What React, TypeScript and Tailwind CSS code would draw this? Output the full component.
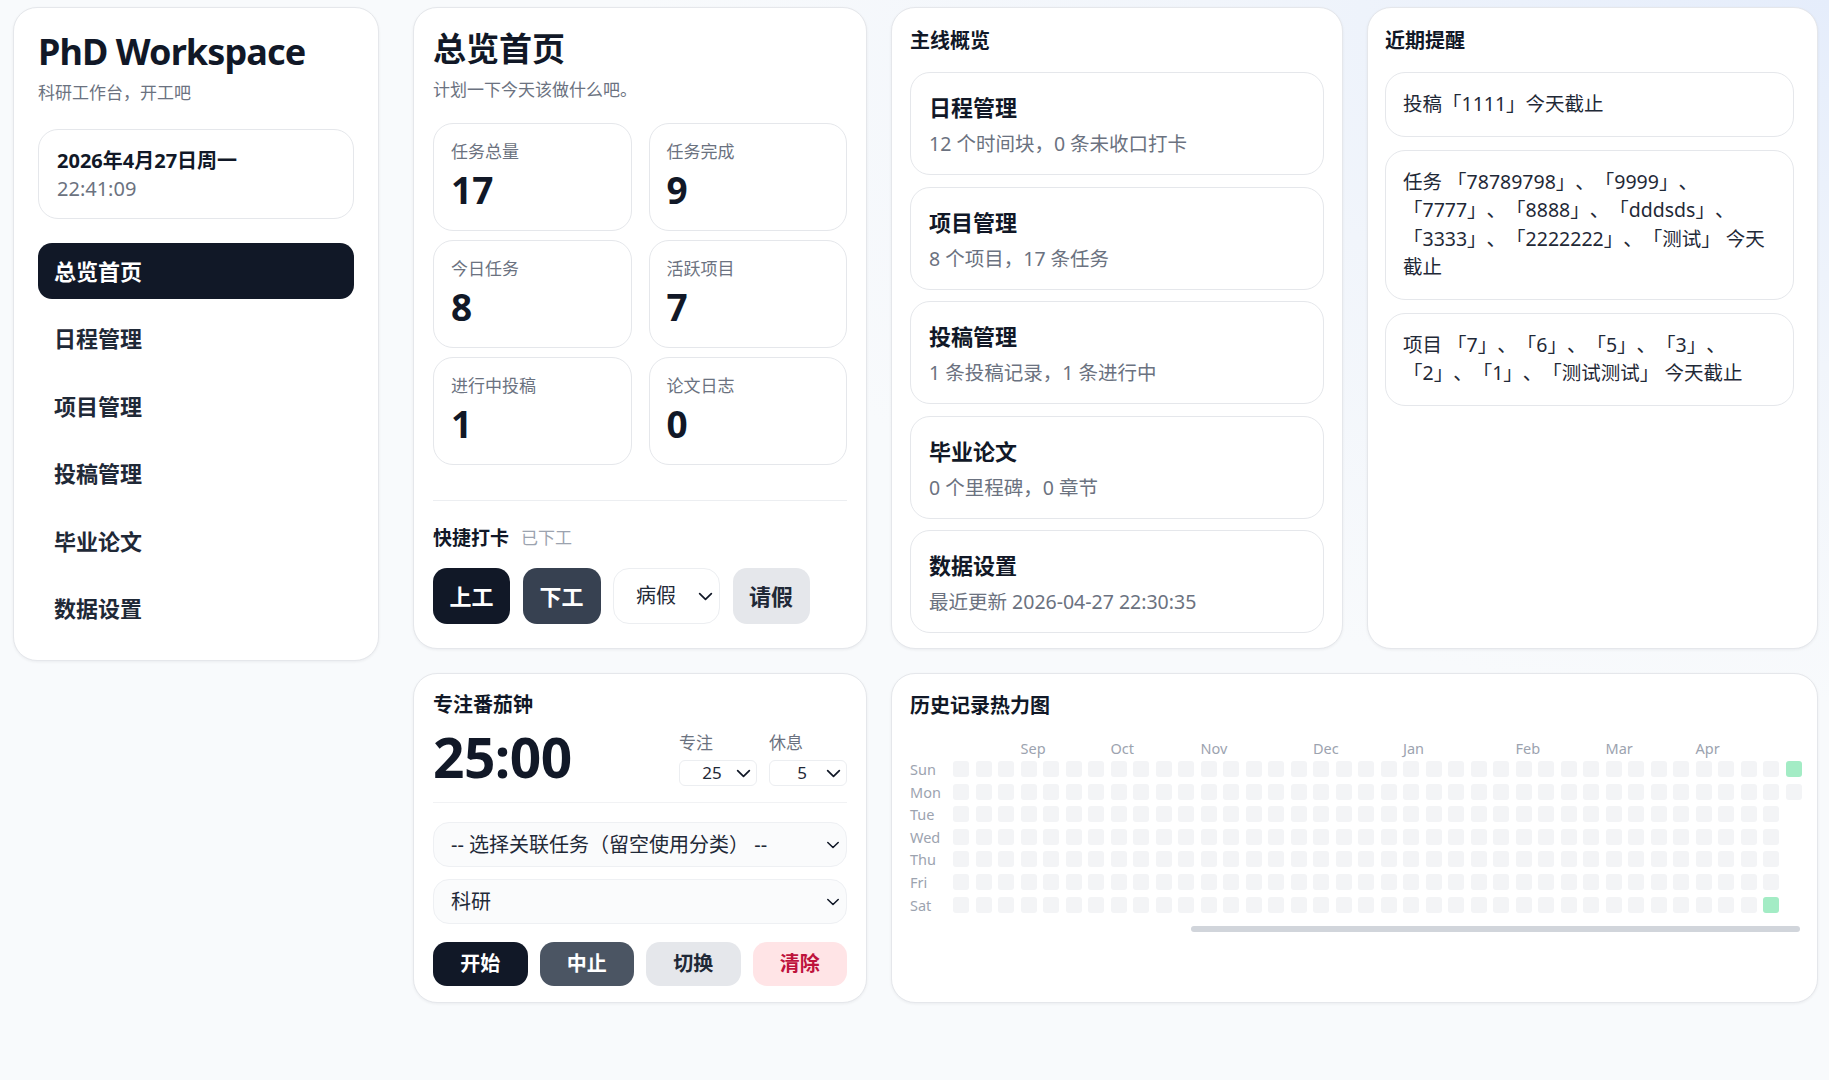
import React from "react";

const Chevron = ({ w = 15, className = "" }: { w?: number; className?: string }) => (
  <svg
    width={w}
    height={Math.round(w * 0.6)}
    viewBox="0 0 16 10"
    fill="none"
    stroke="currentColor"
    strokeWidth={1.9}
    strokeLinecap="round"
    strokeLinejoin="round"
    className={className}
  >
    <path d="M1.5 1.8 L8 8.2 L14.5 1.8" />
  </svg>
);

const nav = ["总览首页", "日程管理", "项目管理", "投稿管理", "毕业论文", "数据设置"];
const stats: [string, string][] = [
  ["任务总量", "17"],
  ["任务完成", "9"],
  ["今日任务", "8"],
  ["活跃项目", "7"],
  ["进行中投稿", "1"],
  ["论文日志", "0"],
];
const mains: [string, string][] = [
  ["日程管理", "12 个时间块，0 条未收口打卡"],
  ["项目管理", "8 个项目，17 条任务"],
  ["投稿管理", "1 条投稿记录，1 条进行中"],
  ["毕业论文", "0 个里程碑，0 章节"],
  ["数据设置", "最近更新 2026-04-27 22:30:35"],
];
const reminders: string[][] = [
  ["投稿「1111」今天截止"],
  ["任务 「78789798」、「9999」、", "「7777」、「8888」、「dddsds」、", "「3333」、「2222222」、「测试」 今天", "截止"],
  ["项目 「7」、「6」、「5」、「3」、", "「2」、「1」、「测试测试」 今天截止"],
];
const days = ["Sun", "Mon", "Tue", "Wed", "Thu", "Fri", "Sat"];
const months: Record<number, string> = { 3: "Sep", 7: "Oct", 11: "Nov", 16: "Dec", 20: "Jan", 25: "Feb", 29: "Mar", 33: "Apr" };
const COLS = 38;

export default function App() {
  return (
    <div className="min-h-screen w-full bg-[#f8fafc] bg-[radial-gradient(ellipse_at_100%_0%,#e5edfb_0%,#f1f5fb_24%,#f8fafc_46%)] font-['Noto_Sans','Noto_Sans_CJK_SC',sans-serif] text-[#111827] [text-spacing-trim:space-all]">
      <div className="flex items-start gap-[34px] pl-[13px] pr-[11px] pt-[7px] pb-[20px]">
        {/* Sidebar */}
        <aside className="w-[366px] shrink-0 rounded-[24px] border border-[#e5e7eb] bg-white px-[24px] pt-[22px] pb-[23px] shadow-[0_1px_3px_rgba(15,23,42,0.06)]">
          <h1 className="text-[36px] leading-[44px] font-bold tracking-[-0.025em] text-[#111827]">PhD Workspace</h1>
          <p className="mt-[7px] text-[17px] leading-[24px] text-[#6b7280]">科研工作台，开工吧</p>
          <div className="mt-[24px] h-[90px] rounded-[20px] border border-[#e5e7eb] bg-white px-[18px] pt-[17px]">
            <div className="text-[20px] leading-[28px] font-bold text-[#111827]">2026年4月27日周一</div>
            <div className="text-[20px] leading-[28px] text-[#6b7280]">22:41:09</div>
          </div>
          <nav className="mt-[24px] flex flex-col gap-[11.6px]">
            {nav.map((n, i) => (
              <div
                key={n}
                className={
                  i === 0
                    ? "flex h-[56px] items-center rounded-[14px] bg-[#111827] px-[16px] text-[22px] font-bold text-white"
                    : "flex h-[56px] items-center rounded-[14px] px-[16px] text-[22px] font-bold text-[#1f2937]"
                }
              >
                {n}
              </div>
            ))}
          </nav>
        </aside>

        {/* Main grid */}
        <main className="grid flex-1 grid-cols-[454px_452px_1fr] grid-rows-[642px_330px] gap-x-[24px] gap-y-[24px]">
          {/* Overview */}
          <section className="rounded-[24px] border border-[#e5e7eb] bg-white px-[19px] pt-[21px] shadow-[0_1px_3px_rgba(15,23,42,0.06)]">
            <h2 className="text-[33px] leading-[39px] font-bold text-[#111827]">总览首页</h2>
            <p className="mt-[10px] text-[17px] leading-[24px] text-[#6b7280]">计划一下今天该做什么吧。</p>
            <div className="mt-[21px] grid grid-cols-2 gap-x-[17px] gap-y-[9px]">
              {stats.map(([l, v]) => (
                <div key={l} className="h-[108px] rounded-[20px] border border-[#e5e7eb] bg-white px-[17px] pt-[17px]">
                  <div className="text-[17px] leading-[22px] text-[#6b7280]">{l}</div>
                  <div className="mt-[8px] text-[37px] leading-[37px] font-bold text-[#111827]">{v}</div>
                </div>
              ))}
            </div>
            <div className="mt-[35px] h-px bg-[#eceef1]" />
            <div className="mt-[25px] flex items-center gap-[12px] leading-[24px]">
              <span className="text-[19px] font-bold text-[#111827]">快捷打卡</span>
              <span className="text-[17px] text-[#9ca3af]">已下工</span>
            </div>
            <div className="mt-[18px] flex items-center gap-[12.5px]">
              <div className="flex h-[56px] w-[77px] items-center justify-center rounded-[14px] bg-[#111827] text-[22px] font-bold text-white">上工</div>
              <div className="flex h-[56px] w-[78px] items-center justify-center rounded-[14px] bg-[#374151] text-[22px] font-bold text-white">下工</div>
              <div className="flex h-[56px] w-[107px] items-center justify-between rounded-[16px] border border-[#eceef1] bg-white pl-[22px] pr-[6px] text-[20px] text-[#1f2937]">
                <span>病假</span>
                <Chevron w={15} className="text-[#111827]" />
              </div>
              <div className="flex h-[56px] w-[77px] items-center justify-center rounded-[14px] bg-[#e5e7eb] text-[22px] font-bold text-[#1f2937]">请假</div>
            </div>
          </section>

          {/* Main overview */}
          <section className="rounded-[24px] border border-[#e5e7eb] bg-white px-[18px] pt-[21px] shadow-[0_1px_3px_rgba(15,23,42,0.06)]">
            <h3 className="text-[20px] leading-[24px] font-bold text-[#111827]">主线概览</h3>
            <div className="mt-[19px] flex flex-col gap-[11.5px]">
              {mains.map(([t, s]) => (
                <div key={t} className="h-[103px] rounded-[20px] border border-[#e5e7eb] bg-white px-[18px] pt-[20px]">
                  <div className="text-[22px] leading-[28px] font-bold text-[#111827]">{t}</div>
                  <div className="mt-[10px] text-[19.5px] leading-[26px] text-[#6b7280]">{s}</div>
                </div>
              ))}
            </div>
          </section>

          {/* Reminders */}
          <section className="rounded-[24px] border border-[#e5e7eb] bg-white pl-[17px] pr-[23px] pt-[21px] shadow-[0_1px_3px_rgba(15,23,42,0.06)]">
            <h3 className="text-[20px] leading-[24px] font-bold text-[#111827]">近期提醒</h3>
            <div className="mt-[19px] flex flex-col gap-[13px]">
              {reminders.map((lines, i) => (
                <div key={i} className="rounded-[20px] border border-[#e5e7eb] bg-white px-[17px] py-[17px] text-[19.5px] leading-[28.5px] text-[#1f2937]">
                  {lines.map((ln, j) => (
                    <div key={j} className="whitespace-nowrap">{ln}</div>
                  ))}
                </div>
              ))}
            </div>
          </section>

          {/* Pomodoro */}
          <section className="rounded-[24px] border border-[#e5e7eb] bg-white px-[19px] pt-[19px] shadow-[0_1px_3px_rgba(15,23,42,0.06)]">
            <h3 className="text-[20px] leading-[24px] font-bold text-[#111827]">专注番茄钟</h3>
            <div className="mt-[12px] flex items-start justify-between">
              <div className="text-[55px] leading-[55px] font-bold tracking-[-0.01em] text-[#111827]">25:00</div>
              <div className="mt-[3px] flex gap-[12px]">
                {[
                  ["专注", "25"],
                  ["休息", "5"],
                ].map(([l, v]) => (
                  <div key={l} className="flex w-[78px] flex-col">
                    <span className="text-[17px] leading-[22px] text-[#6b7280]">{l}</span>
                    <div className="mt-[6px] flex h-[26px] items-center justify-between rounded-[6px] border border-[#eceef1] bg-white pl-[12px] pr-[5px] text-[17px] text-[#1f2937]">
                      <span className="flex-1 text-center">{v}</span>
                      <Chevron w={15} className="ml-[4px] text-[#111827]" />
                    </div>
                  </div>
                ))}
              </div>
            </div>
            <div className="mt-[16px] h-px bg-[#f1f2f4]" />
            <div className="mt-[19px] flex h-[45px] items-center justify-between rounded-[16px] border border-[#eef0f3] bg-[#fafbfc] pl-[17px] pr-[6px] text-[20px] text-[#1f2937]">
              <span>-- 选择关联任务（留空使用分类） --</span>
              <Chevron w={14} className="text-[#111827]" />
            </div>
            <div className="mt-[12px] flex h-[45px] items-center justify-between rounded-[16px] border border-[#eef0f3] bg-[#fafbfc] pl-[17px] pr-[6px] text-[20px] text-[#1f2937]">
              <span>科研</span>
              <Chevron w={14} className="text-[#111827]" />
            </div>
            <div className="mt-[18px] grid grid-cols-4 gap-[12px]">
              <div className="flex h-[44px] items-center justify-center rounded-[14px] bg-[#111827] text-[20px] font-bold text-white">开始</div>
              <div className="flex h-[44px] items-center justify-center rounded-[14px] bg-[#4b5563] text-[20px] font-bold text-white">中止</div>
              <div className="flex h-[44px] items-center justify-center rounded-[14px] bg-[#e5e7eb] text-[20px] font-bold text-[#1f2937]">切换</div>
              <div className="flex h-[44px] items-center justify-center rounded-[14px] bg-[#ffe4e6] text-[20px] font-bold text-[#be123c]">清除</div>
            </div>
          </section>

          {/* Heatmap */}
          <section className="col-span-2 rounded-[24px] border border-[#e5e7eb] bg-white pl-[18px] pr-[16px] pt-[18px] shadow-[0_1px_3px_rgba(15,23,42,0.06)]">
            <h3 className="text-[20px] leading-[28px] font-bold text-[#111827]">历史记录热力图</h3>
            <div className="mt-[18px] flex">
              <div className="w-[43px] shrink-0">
                <div className="h-[20px]" />
                <div className="mt-[3px] flex flex-col gap-[6.6px]">
                  {days.map((d) => (
                    <div key={d} className="h-[16px] text-[14.5px] leading-[16px] text-[#9ca3af]">{d}</div>
                  ))}
                </div>
              </div>
              <div className="flex flex-col">
                <div className="flex h-[20px] gap-[6.5px]">
                  {Array.from({ length: COLS }).map((_, c) => (
                    <div key={c} className="w-[16px] shrink-0 overflow-visible whitespace-nowrap text-[14.5px] leading-[20px] text-[#9ca3af]">
                      {months[c] ?? ""}
                    </div>
                  ))}
                </div>
                <div className="mt-[3px] flex gap-[6.5px]">
                  {Array.from({ length: COLS }).map((_, c) => (
                    <div key={c} className="flex flex-col gap-[6.6px]">
                      {days.map((d, r) => {
                        if (c === COLS - 1 && r > 1) return null;
                        const green = (c === COLS - 1 && r === 0) || (c === COLS - 2 && r === 6);
                        return (
                          <div
                            key={d}
                            className={
                              green
                                ? "h-[16px] w-[16px] rounded-[3px] bg-[#a3ecc5]"
                                : "h-[16px] w-[16px] rounded-[3px] bg-[#f3f4f6]"
                            }
                          />
                        );
                      })}
                    </div>
                  ))}
                </div>
              </div>
            </div>
            <div className="mt-[13px] flex justify-end pr-[1px]">
              <div className="h-[6px] w-[609px] rounded-full bg-[#d1d5db]" />
            </div>
          </section>
        </main>
      </div>
    </div>
  );
}
